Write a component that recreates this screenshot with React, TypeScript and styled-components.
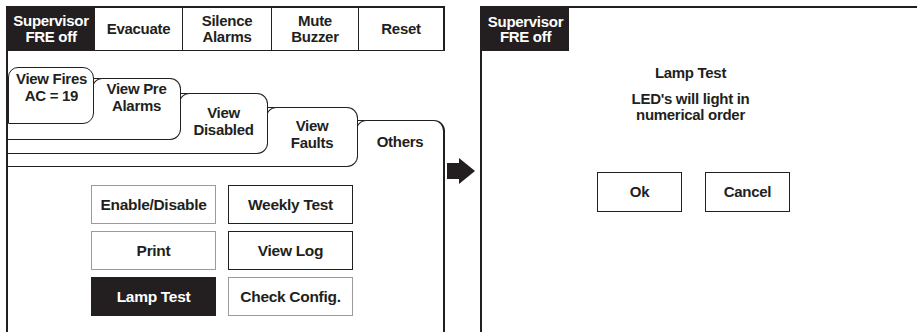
import styled, { createGlobalStyle } from "styled-components";

const ink = "#231f20";
const font = `"Liberation Sans", Arial, Helvetica, sans-serif`;

const GlobalStyle = createGlobalStyle`
  html, body {
    margin: 0;
    padding: 0;
    background: #fff;
    overflow: hidden;
  }
  body {
    font-family: ${font};
    color: ${ink};
  }
`;

const Page = styled.div`
  display: flex;
  height: 332px;
  padding: 6px 0 0 6px;
  box-sizing: border-box;
  font-size: 15px;
  font-weight: bold;
  letter-spacing: -0.3px;
`;

const Panel = styled.div<{ $width?: number }>`
  display: flex;
  flex-direction: column;
  box-sizing: border-box;
  border-top: 2px solid ${ink};
  border-left: 2px solid ${ink};
  ${(p) => (p.$width ? `width: ${p.$width}px; flex: none;` : "flex: 1;")}
`;

const HeaderRow = styled.div`
  display: flex;
  height: 43px;
  flex: none;
  box-sizing: border-box;
  border-bottom: 1px solid ${ink};
`;

const HeaderCell = styled.div<{ $w: number; $dark?: boolean; $last?: boolean }>`
  width: ${(p) => p.$w}px;
  flex: none;
  box-sizing: border-box;
  display: flex;
  align-items: center;
  justify-content: center;
  padding-bottom: 1px;
  text-align: center;
  line-height: 15.5px;
  border-right: ${(p) => (p.$last ? 2 : 1)}px solid ${ink};
  background: ${(p) => (p.$dark ? ink : "#fff")};
  color: ${(p) => (p.$dark ? "#fff" : ink)};
`;

const Badge = styled.div`
  width: 87px;
  height: 43px;
  flex: none;
  box-sizing: border-box;
  display: flex;
  align-items: center;
  justify-content: center;
  padding-bottom: 1px;
  text-align: center;
  line-height: 15.5px;
  background: ${ink};
  color: #fff;
`;

const TabStack = styled.div`
  display: grid;
  flex: 1;
  grid-template-columns: 437px;
  grid-template-rows: 1fr;
`;

const Tab = styled.div<{
  $top: number;
  $width: number;
  $height?: number;
  $offset: number;
  $z: number;
}>`
  grid-area: 1 / 1;
  align-self: ${(p) => (p.$height ? "start" : "stretch")};
  position: relative;
  z-index: ${(p) => p.$z};
  margin-top: ${(p) => p.$top}px;
  width: ${(p) => p.$width}px;
  ${(p) => (p.$height ? `height: ${p.$height}px;` : "")}
  box-sizing: border-box;
  background: #fff;
  border-top: 1px solid ${ink};
  border-right: ${(p) => (p.$height ? 1 : 2)}px solid ${ink};
  border-bottom: ${(p) => (p.$height ? `1px solid ${ink}` : "none")};
  border-left: ${(p) => (p.$offset === 0 ? `1px solid ${ink}` : "none")};
  border-radius: ${(p) =>
    p.$offset === 0 ? "10px 11px 11px 0" : p.$height ? "0 11px 11px 0" : "0 11px 0 0"};

  /* rounded top-left corner of the tab's visible label part */
  &::before {
    content: "";
    display: ${(p) => (p.$offset === 0 ? "none" : "block")};
    position: absolute;
    top: -1px;
    left: ${(p) => p.$offset - 1}px;
    width: 11px;
    height: 11px;
    border-top: 1px solid ${ink};
    border-left: 1px solid ${ink};
    border-top-left-radius: 10px;
    background: #fff;
  }
`;

const TabLabel = styled.div<{ $offset: number; $pad: number; $w: number }>`
  margin-left: ${(p) => p.$offset}px;
  width: ${(p) => p.$w}px;
  padding-top: ${(p) => p.$pad}px;
  text-align: center;
  line-height: 17px;
`;

const ButtonGrid = styled.div`
  display: grid;
  grid-template-columns: 125px 125px;
  column-gap: 12px;
  row-gap: 7px;
  margin: 35px 0 0 83px;
`;

const ActionButton = styled.div<{ $variant: "light" | "dark" | "active" }>`
  height: 39px;
  box-sizing: border-box;
  display: flex;
  align-items: center;
  justify-content: center;
  font-size: 15.5px;
  border: 1px solid ${(p) => (p.$variant === "light" ? "#9c9a9a" : ink)};
  background: ${(p) => (p.$variant === "active" ? ink : "#fff")};
  color: ${(p) => (p.$variant === "active" ? "#fff" : ink)};
`;

const ArrowSlot = styled.div`
  width: 35px;
  flex: none;
  padding: 152px 0 0 2px;
  box-sizing: border-box;
`;

const DialogBody = styled.div`
  display: flex;
  flex-direction: column;
  align-items: center;
  padding: 14px 18px 0 0;
  text-align: center;
  line-height: 16px;
`;

const Message = styled.div`
  margin-top: 10px;
`;

const DialogButtons = styled.div`
  display: flex;
  gap: 23px;
  margin: 49px 0 0 6px;
`;

const DialogButton = styled.div`
  width: 85px;
  height: 40px;
  box-sizing: border-box;
  display: flex;
  align-items: center;
  justify-content: center;
  border: 1px solid ${ink};
`;

const headers = [
  { label: ["Supervisor", "FRE off"], w: 87, dark: true },
  { label: ["Evacuate"], w: 88 },
  { label: ["Silence", "Alarms"], w: 89 },
  { label: ["Mute", "Buzzer"], w: 87 },
  { label: ["Reset"], w: 86 },
];

const tabs = [
  { label: ["View Fires", "AC = 19"], top: 16, width: 86, height: 57, offset: 0, pad: 2 },
  { label: ["View Pre", "Alarms"], top: 27, width: 173, height: 62, offset: 85, pad: 1 },
  { label: ["View", "Disabled"], top: 42, width: 260, height: 61, offset: 172, pad: 10 },
  { label: ["View", "Faults"], top: 56, width: 350, height: 60, offset: 259, pad: 9 },
];

const actions: { label: string; variant: "light" | "dark" | "active" }[] = [
  { label: "Enable/Disable", variant: "light" },
  { label: "Weekly Test", variant: "dark" },
  { label: "Print", variant: "light" },
  { label: "View Log", variant: "dark" },
  { label: "Lamp Test", variant: "active" },
  { label: "Check Config.", variant: "light" },
];

const Lines = ({ lines }: { lines: string[] }) => (
  <>
    {lines.map((l, i) => (
      <span key={i}>
        {i > 0 && <br />}
        {l}
      </span>
    ))}
  </>
);

export default function App() {
  return (
    <>
      <GlobalStyle />
      <Page>
        <Panel $width={439}>
          <HeaderRow>
            {headers.map((h, i) => (
              <HeaderCell key={i} $w={h.w} $dark={h.dark} $last={i === headers.length - 1}>
                <div>
                  <Lines lines={h.label} />
                </div>
              </HeaderCell>
            ))}
          </HeaderRow>
          <TabStack>
            <Tab $top={69} $width={437} $offset={349} $z={1}>
              <TabLabel $offset={349} $pad={12} $w={86}>
                Others
              </TabLabel>
              <ButtonGrid>
                {actions.map((a) => (
                  <ActionButton key={a.label} $variant={a.variant}>
                    {a.label}
                  </ActionButton>
                ))}
              </ButtonGrid>
            </Tab>
            {tabs.map((t, i) => (
              <Tab
                key={i}
                $top={t.top}
                $width={t.width}
                $height={t.height}
                $offset={t.offset}
                $z={10 - i}
              >
                <TabLabel $offset={t.offset} $pad={t.pad} $w={t.width - t.offset - 1}>
                  <Lines lines={t.label} />
                </TabLabel>
              </Tab>
            ))}
          </TabStack>
        </Panel>
        <ArrowSlot>
          <svg width="28" height="26" viewBox="0 0 28 26">
            <polygon points="0,5 12,5 12,0 28,13 12,26 12,21 0,21" fill={ink} />
          </svg>
        </ArrowSlot>
        <Panel>
          <Badge>
            <div>
              Supervisor
              <br />
              FRE off
            </div>
          </Badge>
          <DialogBody>
            <div>Lamp Test</div>
            <Message>
              LED's will light in
              <br />
              numerical order
            </Message>
            <DialogButtons>
              <DialogButton>Ok</DialogButton>
              <DialogButton>Cancel</DialogButton>
            </DialogButtons>
          </DialogBody>
        </Panel>
      </Page>
    </>
  );
}
